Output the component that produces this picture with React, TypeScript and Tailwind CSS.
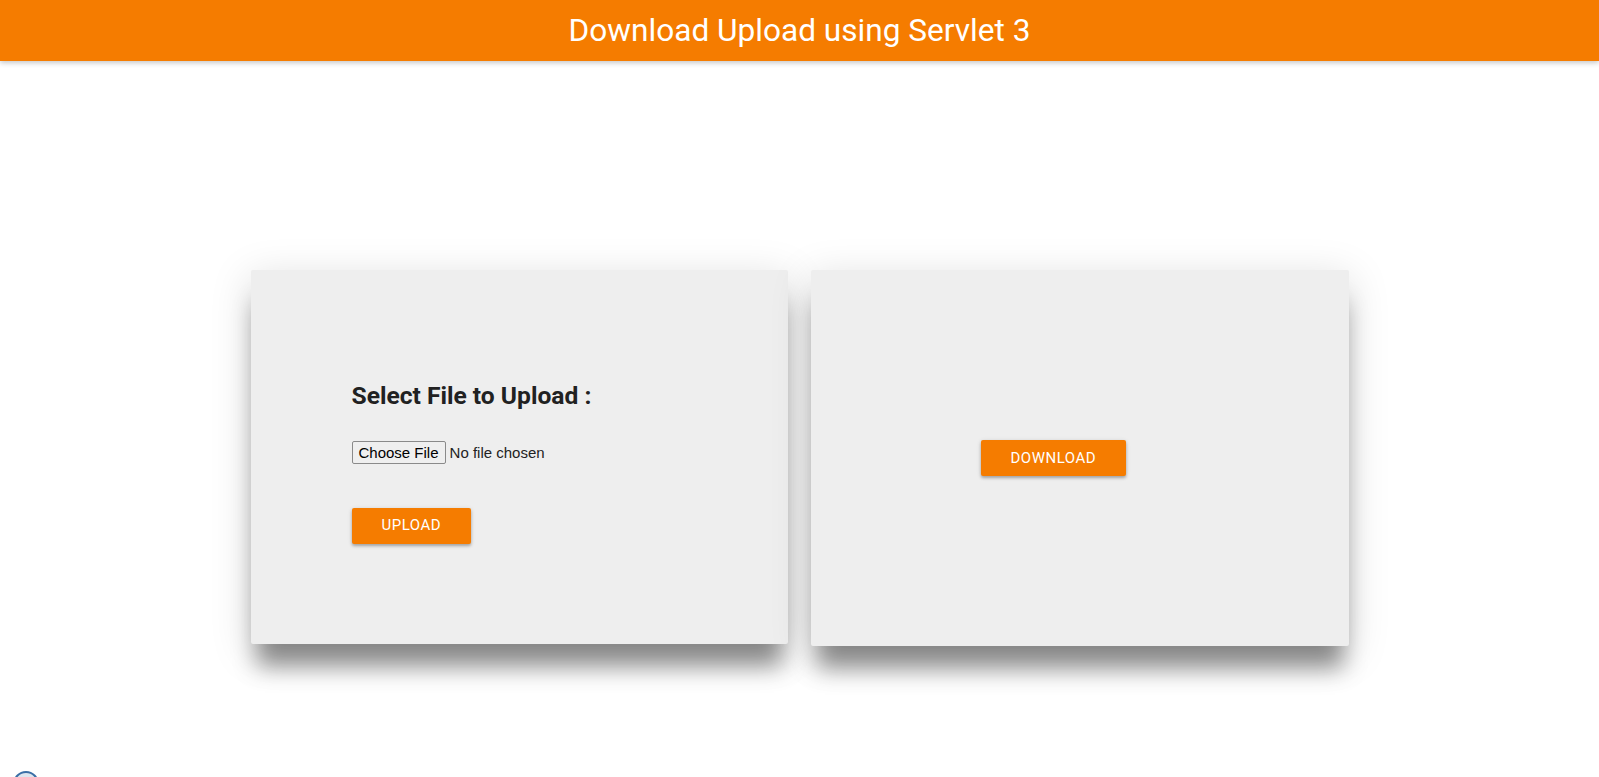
import React from "react";

const btn =
  "h-[36px] px-[30px] bg-[#f57c00] text-white text-[15px] font-normal tracking-[0.5px] uppercase rounded-[2px] shadow-[0_2px_3px_rgba(0,0,0,0.25),0_1px_5px_rgba(0,0,0,0.12)] font-['Roboto',sans-serif]";

const card =
  "bg-[#eeeeee] rounded-[2px] shadow-[0_28px_22px_-6px_rgba(0,0,0,0.42),0_8px_40px_2px_rgba(0,0,0,0.13)]";

export default function App() {
  return (
    <div className="relative h-[777px] overflow-hidden bg-white font-['Roboto',sans-serif]">
      <header className="h-[61px] bg-[#f57c00] flex items-center justify-center shadow-[0_2px_5px_rgba(0,0,0,0.22)]">
        <h1 className="text-white text-[31.6px] font-normal leading-none">
          Download Upload using Servlet 3
        </h1>
      </header>

      <main className="flex justify-center gap-[23px] pt-[209px]">
        <section className={`${card} w-[537px] h-[374px] pl-[101px] pt-[111px] flex flex-col items-start`}>
          <h3 className="text-[24.6px] leading-[29px] font-bold text-[#212121]">
            Select File to Upload :
          </h3>
          <input
            type="file"
            className="mt-[31px] text-[15px] text-[#222] font-['Liberation_Sans',Arial,sans-serif] file:mr-[4px] file:px-[6px] file:py-0 file:h-[23px] file:border file:border-[#8a8a8a] file:rounded-[2px] file:bg-[#efefef] file:text-black file:text-[15px] file:font-['Liberation_Sans',Arial,sans-serif]"
          />
          <button className={`${btn} mt-[43px]`}>Upload</button>
        </section>

        <section className={`${card} w-[538px] h-[376px] pl-[170px] flex items-center`}>
          <button className={btn}>Download</button>
        </section>
      </main>

      <div className="absolute left-[13px] top-[771px] w-[26px] h-[26px] rounded-full border-2 border-[#3b6fa6] bg-[#dde6ef]" />
    </div>
  );
}
